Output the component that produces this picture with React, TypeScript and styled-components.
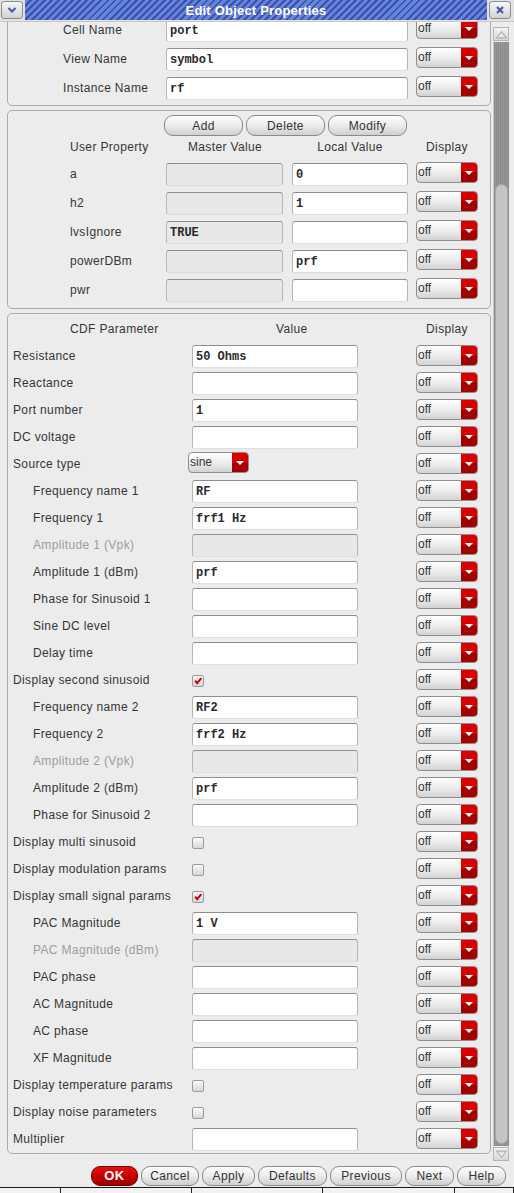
import React from "react";
import styled, { createGlobalStyle } from "styled-components";

type CdfRow = {
  label: string;
  indent?: boolean;
  dim?: boolean;
  kind: "input" | "check" | "select";
  value?: string;
  checked?: boolean;
};

const cdfRows: CdfRow[] = [
  { label: "Resistance", kind: "input", value: "50 Ohms" },
  { label: "Reactance", kind: "input" },
  { label: "Port number", kind: "input", value: "1" },
  { label: "DC voltage", kind: "input" },
  { label: "Source type", kind: "select", value: "sine" },
  { label: "Frequency name 1", indent: true, kind: "input", value: "RF" },
  { label: "Frequency 1", indent: true, kind: "input", value: "frf1 Hz" },
  { label: "Amplitude 1 (Vpk)", indent: true, dim: true, kind: "input" },
  { label: "Amplitude 1 (dBm)", indent: true, kind: "input", value: "prf" },
  { label: "Phase for Sinusoid 1", indent: true, kind: "input" },
  { label: "Sine DC level", indent: true, kind: "input" },
  { label: "Delay time", indent: true, kind: "input" },
  { label: "Display second sinusoid", kind: "check", checked: true },
  { label: "Frequency name 2", indent: true, kind: "input", value: "RF2" },
  { label: "Frequency 2", indent: true, kind: "input", value: "frf2 Hz" },
  { label: "Amplitude 2 (Vpk)", indent: true, dim: true, kind: "input" },
  { label: "Amplitude 2 (dBm)", indent: true, kind: "input", value: "prf" },
  { label: "Phase for Sinusoid 2", indent: true, kind: "input" },
  { label: "Display multi sinusoid", kind: "check" },
  { label: "Display modulation params", kind: "check" },
  { label: "Display small signal params", kind: "check", checked: true },
  { label: "PAC Magnitude", indent: true, kind: "input", value: "1 V" },
  { label: "PAC Magnitude (dBm)", indent: true, dim: true, kind: "input" },
  { label: "PAC phase", indent: true, kind: "input" },
  { label: "AC Magnitude", indent: true, kind: "input" },
  { label: "AC phase", indent: true, kind: "input" },
  { label: "XF Magnitude", indent: true, kind: "input" },
  { label: "Display temperature params", kind: "check" },
  { label: "Display noise parameters", kind: "check" },
  { label: "Multiplier", kind: "input" },
];

const userProps = [
  { name: "a", master: "", local: "0" },
  { name: "h2", master: "", local: "1" },
  { name: "lvsIgnore", master: "TRUE", local: "" },
  { name: "powerDBm", master: "", local: "prf" },
  { name: "pwr", master: "", local: "" },
];

const footerButtons = [
  { text: "Cancel", w: 58 },
  { text: "Apply", w: 53 },
  { text: "Defaults", w: 69 },
  { text: "Previous", w: 72 },
  { text: "Next", w: 49 },
  { text: "Help", w: 49 },
];

const GlobalStyle = createGlobalStyle`
  html, body {
    margin: 0;
    padding: 0;
    background: #ececec;
  }
  body {
    font-family: "Liberation Sans", Arial, sans-serif;
  }
`;

const Select: React.FC<{ text: string; width?: number }> = ({ text, width }) => (
  <SelectBox $w={width || 62}>
    <SelectText>{text}</SelectText>
    <SelectArrow>
      <Caret />
    </SelectArrow>
  </SelectBox>
);

const Check: React.FC<{ on?: boolean }> = ({ on }) => (
  <CheckBox>
    {on && (
      <svg width="12" height="12" viewBox="0 0 12 12">
        <path d="M2.5 5.5 L5 8.5 L10 2.5" fill="none" stroke="#c40000" strokeWidth="2.4" />
      </svg>
    )}
  </CheckBox>
);

const App: React.FC = () => {
  return (
    <Window>
      <GlobalStyle />
      <TitleBar>
        <TitleButton>
          <svg width="12" height="10" viewBox="0 0 12 10">
            <path d="M2.5 3 L6 6.5 L9.5 3" fill="none" stroke="#4656a8" strokeWidth="2" />
          </svg>
        </TitleButton>
        <TitleStripe>Edit Object Properties</TitleStripe>
        <TitleButton>
          <svg width="10" height="10" viewBox="0 0 10 10">
            <path d="M2 2 L8 8 M8 2 L2 8" stroke="#4656a8" strokeWidth="2.2" />
          </svg>
        </TitleButton>
      </TitleBar>

      <Body>
        <Content>
          <Panel $pad="3px 12px 2px 55px" $top={-10}>
            {[
              ["Cell Name", "port"],
              ["View Name", "symbol"],
              ["Instance Name", "rf"],
            ].map(([l, v]) => (
              <Row key={l} $cols="95px 242px 62px" $h={29}>
                <Label>{l}</Label>
                <Field $w={242}>{v}</Field>
                <Select text="off" />
              </Row>
            ))}
          </Panel>

          <Panel $pad="2px 12px 3px 62px">
            <Row $cols="88px 1fr" $h={21}>
              <span />
              <ButtonRow>
                <PillButton $w={79}>Add</PillButton>
                <PillButton $w={79}>Delete</PillButton>
                <PillButton $w={79}>Modify</PillButton>
              </ButtonRow>
            </Row>
            <Row $cols="88px 118px 116px 62px" $h={26}>
              <Header>User Property</Header>
              <Header $center>Master Value</Header>
              <Header $center>Local Value</Header>
              <Header $center>Display</Header>
            </Row>
            {userProps.map((p) => (
              <Row key={p.name} $cols="88px 118px 116px 62px" $h={29}>
                <Label>{p.name}</Label>
                <Field $w={117} $disabled>{p.master}</Field>
                <Field $w={116}>{p.local}</Field>
                <Select text="off" />
              </Row>
            ))}
          </Panel>

          <Panel $pad="0 12px 0 5px">
            <Row $cols="171px 216px 62px" $h={29}>
              <Header $pad={57}>CDF Parameter</Header>
              <Header $pad={84}>Value</Header>
              <Header $center>Display</Header>
            </Row>
            {cdfRows.map((r) => (
              <Row key={r.label} $cols="171px 216px 62px" $h={27}>
                <Label $indent={r.indent} $dim={r.dim}>
                  {r.label}
                </Label>
                {r.kind === "input" && (
                  <Field $w={166} $disabled={r.dim}>
                    {r.value}
                  </Field>
                )}
                {r.kind === "check" && <Check on={r.checked} />}
                {r.kind === "select" && (
                  <SourceSelect>
                    <Select text={r.value || ""} width={61} />
                  </SourceSelect>
                )}
                <Select text="off" />
              </Row>
            ))}
          </Panel>
        </Content>

        <ScrollBar>
          <ScrollArrow>
            <svg width="13" height="9" viewBox="0 0 13 9">
              <path d="M1.5 8 L6.5 1.5 L11.5 8 Z" fill="#e6e6e6" stroke="#a0a0a0" strokeWidth="1" />
            </svg>
          </ScrollArrow>
          <Track>
            <Thumb />
          </Track>
          <ScrollArrow>
            <svg width="13" height="9" viewBox="0 0 13 9">
              <path d="M1.5 1 L6.5 7.5 L11.5 1 Z" fill="#e6e6e6" stroke="#a0a0a0" strokeWidth="1" />
            </svg>
          </ScrollArrow>
        </ScrollBar>
      </Body>

      <Footer>
        <OkButton>OK</OkButton>
        {footerButtons.map((b) => (
          <PillButton key={b.text} $w={b.w} $h={20}>
            {b.text}
          </PillButton>
        ))}
      </Footer>

      <TaskStrip>
        <TaskCell $w={61} />
        <TaskCell $w={131} />
        <TaskCell $w={131} />
        <TaskCell $w={132} />
        <TaskCell $w={59} />
      </TaskStrip>
    </Window>
  );
};

export default App;

const Window = styled.div`
  width: 514px;
  height: 1193px;
  display: flex;
  flex-direction: column;
  background: #ececec;
  overflow: hidden;
`;

const TitleBar = styled.div`
  height: 22px;
  flex-shrink: 0;
  display: flex;
  align-items: flex-start;
  gap: 2px;
  padding: 1px 3px 0 1px;
  box-sizing: border-box;
  background: #e2e2e2;
  border-bottom: 1px solid #c8c8c8;
`;

const TitleButton = styled.div`
  width: 22px;
  height: 18px;
  box-sizing: border-box;
  border: 1px solid #8c8c8c;
  border-radius: 3px;
  background: linear-gradient(#f6f6f6, #d2d2d2);
  display: flex;
  align-items: center;
  justify-content: center;
`;

const TitleStripe = styled.div`
  flex: 1;
  height: 20px;
  margin-top: -1px;
  display: flex;
  align-items: center;
  justify-content: center;
  background: repeating-linear-gradient(135deg, #6483dc 0 3px, #3c52aa 3px 5px);
  color: #fff;
  font: bold 13px "Liberation Sans", Arial, sans-serif;
  letter-spacing: 0.2px;
`;

const Body = styled.div`
  flex: 1;
  min-height: 0;
  display: flex;
`;

const Content = styled.div`
  flex: 1;
  min-width: 0;
  overflow: hidden;
  padding: 0 2px 0 7px;
  display: flex;
  flex-direction: column;
  gap: 4px;
`;

const Panel = styled.section<{ $pad: string; $top?: number }>`
  flex-shrink: 0;
  margin-top: ${(p) => p.$top || 0}px;
  padding: ${(p) => p.$pad};
  border: 1px solid #aaaaaa;
  border-radius: 5px;
  display: flex;
  flex-direction: column;
`;

const Row = styled.div<{ $cols: string; $h: number }>`
  display: grid;
  grid-template-columns: ${(p) => p.$cols};
  column-gap: 8px;
  align-items: center;
  height: ${(p) => p.$h}px;
  & > :last-child {
    align-self: start;
    margin-top: 2px;
  }
`;

const Label = styled.span<{ $indent?: boolean; $dim?: boolean }>`
  font-size: 12px;
  letter-spacing: 0.35px;
  white-space: nowrap;
  margin-top: -2px;
  padding-left: ${(p) => (p.$indent ? 20 : 0)}px;
  color: ${(p) => (p.$dim ? "#9c9c9c" : "#353535")};
`;

const Header = styled.span<{ $center?: boolean; $pad?: number }>`
  font-size: 12px;
  letter-spacing: 0.35px;
  white-space: nowrap;
  color: #353535;
  text-align: ${(p) => (p.$center ? "center" : "left")};
  padding-left: ${(p) => p.$pad || 0}px;
  &&& {
    align-self: center;
    margin-top: 0;
  }
`;

const Field = styled.div<{ $w: number; $disabled?: boolean }>`
  width: ${(p) => p.$w}px;
  height: 23px;
  box-sizing: border-box;
  padding: 1px 3px 0;
  display: flex;
  align-items: center;
  border: 1px solid #b6b6b6;
  border-top-color: #8e8e8e;
  border-bottom-color: #dedede;
  border-radius: 3px;
  background: ${(p) => (p.$disabled ? "#e8e8e8" : "#ffffff")};
  font: bold 12px "Liberation Mono", "Courier New", monospace;
  color: #2a2a2a;
  white-space: nowrap;
`;

const SelectBox = styled.div<{ $w: number }>`
  width: ${(p) => p.$w}px;
  height: 21px;
  box-sizing: border-box;
  display: flex;
  border: 1px solid #8e8e8e;
  border-radius: 4px;
  overflow: hidden;
  background: linear-gradient(#fefefe, #ececec 55%, #d2d2d2);
`;

const SelectText = styled.span`
  flex: 1;
  padding-left: 1px;
  font-size: 12px;
  line-height: 18px;
  color: #333;
`;

const SelectArrow = styled.span`
  width: 16px;
  display: flex;
  align-items: center;
  justify-content: center;
  background: linear-gradient(#d80000 0 50%, #a50000 50%);
`;

const Caret = styled.span`
  width: 0;
  height: 0;
  border-left: 4px solid transparent;
  border-right: 4px solid transparent;
  border-top: 4px solid #ffffff;
`;

const SourceSelect = styled.div`
  margin-left: -4px;
  margin-top: -4px;
`;

const CheckBox = styled.div`
  width: 12px;
  height: 12px;
  box-sizing: border-box;
  border: 1px solid #9a9a9a;
  border-radius: 2px;
  background: linear-gradient(#fafafa, #d6d6d6);
  display: flex;
  align-items: center;
  justify-content: center;
`;

const ButtonRow = styled.div`
  display: flex;
  gap: 3px;
  margin-left: -2px;
  height: 21px;
`;

const PillButton = styled.div<{ $w: number; $h?: number }>`
  width: ${(p) => p.$w}px;
  height: ${(p) => p.$h || 21}px;
  box-sizing: border-box;
  border: 1px solid #8a8a8a;
  border-radius: 9px;
  background: linear-gradient(#fdfdfd, #ececec 50%, #cfcfcf);
  display: flex;
  align-items: center;
  justify-content: center;
  font-size: 12px;
  letter-spacing: 0.35px;
  color: #333;
`;

const OkButton = styled.div`
  width: 47px;
  height: 20px;
  box-sizing: border-box;
  border: 1px solid #7a0000;
  border-radius: 9px;
  background: linear-gradient(#e41010, #c80000 50%, #980000);
  display: flex;
  align-items: center;
  justify-content: center;
  font: bold 13px "Liberation Sans", Arial, sans-serif;
  letter-spacing: 0.5px;
  color: #fff;
`;

const ScrollBar = styled.div`
  width: 16px;
  margin: 5px 5px 3px 0;
  display: flex;
  flex-direction: column;
  gap: 1px;
`;

const ScrollArrow = styled.div`
  height: 14px;
  flex-shrink: 0;
  box-sizing: border-box;
  border: 1px solid #b4b4b4;
  background: linear-gradient(#f2f2f2, #d8d8d8);
  display: flex;
  align-items: center;
  justify-content: center;
`;

const Track = styled.div`
  flex: 1;
  display: flex;
  flex-direction: column;
  padding: 142px 1px 2px;
  box-sizing: border-box;
  border-left: 1px solid #c8c8c8;
  background: repeating-linear-gradient(90deg, #8c8c8c 0 1px, #979797 1px 2px);
`;

const Thumb = styled.div`
  flex: 1;
  border-radius: 7px;
  background: #c4c4c4;
  border: 1px solid #a8a8a8;
`;

const Footer = styled.div`
  height: 23px;
  flex-shrink: 0;
  display: flex;
  align-items: center;
  justify-content: flex-end;
  gap: 3px;
  padding-right: 8px;
`;

const TaskStrip = styled.div`
  height: 5px;
  flex-shrink: 0;
  display: flex;
  border-top: 1px solid #1a1a1a;
  background: #f2f2f2;
`;

const TaskCell = styled.div<{ $w: number }>`
  width: ${(p) => p.$w}px;
  box-sizing: border-box;
  border-right: 1px solid #222;
`;
